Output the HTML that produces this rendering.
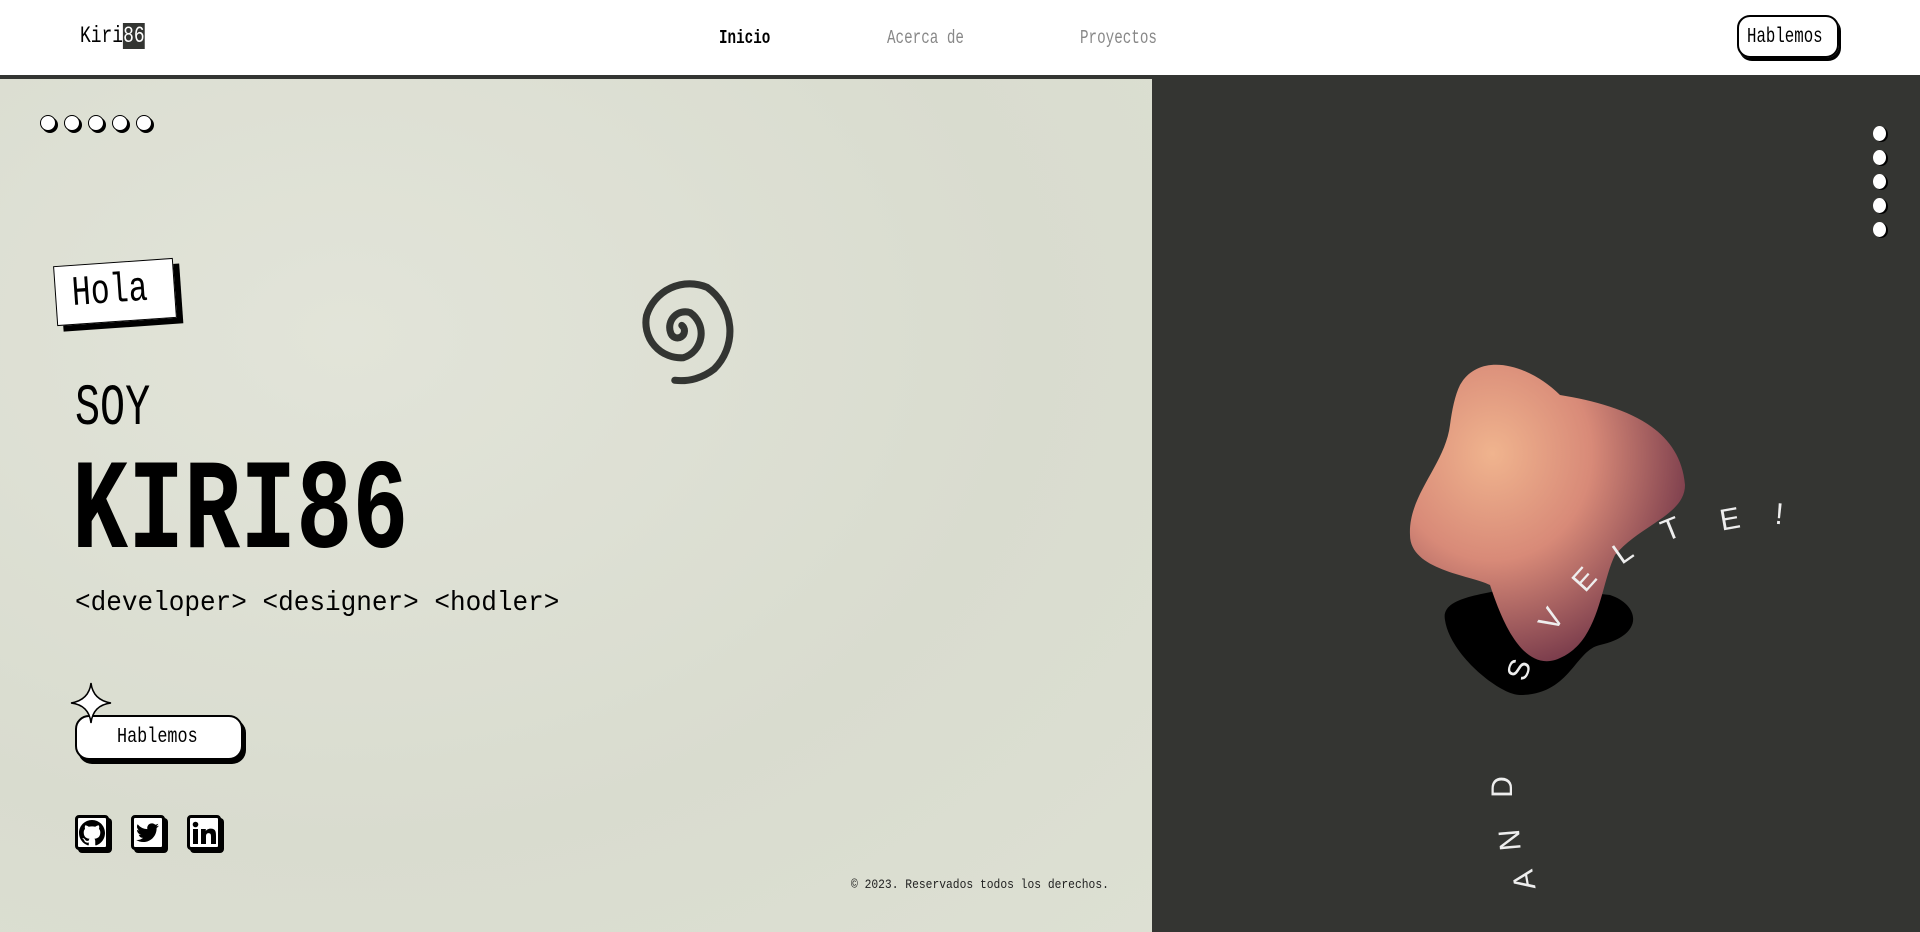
<!DOCTYPE html>
<html><head><meta charset="utf-8"><style>
*{margin:0;padding:0;box-sizing:border-box}
body{width:1920px;height:932px;overflow:hidden;font-family:"Liberation Mono",monospace;background:#fff;position:relative}
.c{display:inline-block;transform:scaleX(.75);transform-origin:left center;white-space:nowrap}
nav{position:absolute;left:0;top:0;width:1920px;height:79px;background:#fff;border-bottom:4px solid #333532;z-index:2}
.abs{position:absolute}
.left{position:absolute;left:0;top:79px;width:1152px;height:853px;background:radial-gradient(ellipse at 30% 30%,#e2e4d9,#d9dccf 60%,#dde0d3)}
.right{position:absolute;left:1152px;top:79px;width:768px;height:853px;background:#343532}
.dot{position:absolute;width:16px;height:16px;border-radius:50%;background:#fff;border:1.5px solid #000;box-shadow:2px 2px 0 #000}
.rdot{position:absolute;width:13px;height:15px;border-radius:50%;background:#fff;box-shadow:2px 1px 0 #000}
.soc{position:absolute;top:815px;width:34px;height:35px;border:3px solid #000;border-radius:4px;background:#fff;box-shadow:3px 3px 0 #000;display:flex;align-items:center;justify-content:center}
.lt{position:absolute;color:#eee;font-family:"Liberation Sans",sans-serif;font-size:30px;line-height:1}
</style></head><body>
<nav>
 <div class="abs" style="left:80px;top:23px;font-size:23px"><span class="c" style="transform:scaleX(.78)">Kiri<span style="background:#333532;color:#fff">86</span></span></div>
 <div class="abs" style="left:719px;top:27px;font-size:19px;font-weight:bold"><span class="c">Inicio</span></div>
 <div class="abs" style="left:887px;top:27px;font-size:19px;color:#888"><span class="c">Acerca de</span></div>
 <div class="abs" style="left:1080px;top:27px;font-size:19px;color:#888"><span class="c">Proyectos</span></div>
 <div class="abs" style="left:1737px;top:15px;width:102px;height:43px;border:2px solid #000;border-radius:13px;box-shadow:2px 3px 0 #000;font-size:21px;padding:9px 0 0 8px"><span class="c">Hablemos</span></div>
</nav>
<div class="left"></div>
<div class="right"></div>
<div class="dot" style="left:40px;top:115px"></div>
<div class="dot" style="left:64px;top:115px"></div>
<div class="dot" style="left:88px;top:115px"></div>
<div class="dot" style="left:112px;top:115px"></div>
<div class="dot" style="left:136px;top:115px"></div>
<div class="rdot" style="left:1873px;top:126px"></div>
<div class="rdot" style="left:1873px;top:150px"></div>
<div class="rdot" style="left:1873px;top:174px"></div>
<div class="rdot" style="left:1873px;top:198px"></div>
<div class="rdot" style="left:1873px;top:222px"></div>

<div class="abs" style="left:55px;top:262px;width:120px;height:60px;background:#fff;border:1.5px solid #000;box-shadow:6px 6px 0 #000;transform:rotate(-4deg);font-size:42px;padding:4px 0 0 16px"><span class="c">Hola</span></div>

<svg class="abs" style="left:614px;top:266px" width="130" height="130" viewBox="0 0 120 120">
<path d="M62 56 a5 5 0 1 1 -8 5 a11 11 0 0 1 14 -14 a18 18 0 0 1 -5 32 a25 25 0 0 1 -26 -30 a32 32 0 0 1 43 -20 a38 38 0 0 1 5 58 a38 38 0 0 1 -28 8" fill="none" stroke="#333532" stroke-width="5" stroke-linecap="round" transform="translate(60 60) scale(1.3) translate(-60 -60)"/>
</svg>

<div class="abs" style="left:75px;top:381px;font-size:58px;line-height:1"><span class="c" style="transform:scaleX(.72)">SOY</span></div>
<div class="abs" style="left:72px;top:450px;font-size:128px;font-weight:bold;line-height:1"><span class="c" style="transform:scaleX(.73)">KIRI86</span></div>
<div class="abs" style="left:75px;top:590px;font-size:28px;line-height:1"><span class="c" style="transform:scaleX(.93)">&lt;developer&gt; &lt;designer&gt; &lt;hodler&gt;</span></div>

<div class="abs" style="left:75px;top:715px;width:168px;height:45px;background:#fff;border:2px solid #000;border-radius:14px;box-shadow:3px 4px 0 #000;font-size:21px;padding:9px 0 0 40px"><span class="c" style="transform:scaleX(.8)">Hablemos</span></div>
<svg class="abs" style="left:70px;top:682px" width="42" height="42" viewBox="0 0 42 42"><path d="M21 1 Q23 18 41 21 Q23 23 21 41 Q19 23 1 21 Q19 18 21 1Z" fill="#fff" stroke="#000" stroke-width="1.5"/></svg>

<div class="soc" style="left:75px"><svg width="26" height="26" viewBox="0 0 16 16"><path d="M8 0C3.58 0 0 3.58 0 8c0 3.540 2.290 6.530 5.470 7.590.4.07.55-.17.55-.38v-1.34c-2.230.48-2.7-1.070-2.7-1.070-.36-.93-.89-1.170-.89-1.170-.73-.5.05-.49.05-.49.8.06 1.230.83 1.230.83.72 1.230 1.870.87 2.330.66.07-.52.28-.87.51-1.070-1.780-.2-3.640-.89-3.640-3.950 0-.87.31-1.590.82-2.150-.08-.2-.36-1.020.08-2.120 0 0 .67-.21 2.2.82a7.6 7.6 0 0 1 4 0c1.530-1.040 2.2-.82 2.2-.82.44 1.1.16 1.920.08 2.120.51.56.82 1.270.82 2.150 0 3.070-1.870 3.750-3.650 3.950.29.25.54.73.54 1.480v2.2c0 .21.15.46.55.38A8 8 0 0 0 16 8c0-4.420-3.580-8-8-8z"/></svg></div>
<div class="soc" style="left:131px"><svg width="26" height="24" viewBox="0 0 24 24"><path d="M23 4.6a9.4 9.4 0 0 1-2.7.7 4.7 4.7 0 0 0 2-2.6 9.4 9.4 0 0 1-3 1.1 4.7 4.7 0 0 0-8 4.3A13.3 13.3 0 0 1 1.6 3.2a4.7 4.7 0 0 0 1.5 6.3 4.7 4.7 0 0 1-2.1-.6v.1a4.7 4.7 0 0 0 3.8 4.6 4.7 4.7 0 0 1-2.1.1 4.7 4.7 0 0 0 4.4 3.2A9.4 9.4 0 0 1 0 18.9a13.3 13.3 0 0 0 7.2 2.1c8.6 0 13.4-7.2 13.4-13.4v-.6A9.5 9.5 0 0 0 23 4.6z"/></svg></div>
<div class="soc" style="left:187px"><svg width="24" height="24" viewBox="0 0 24 24"><rect x="1" y="8" width="5" height="15"/><circle cx="3.5" cy="3.5" r="2.8"/><path d="M9 8h4.8v2.1c.7-1.3 2.4-2.5 4.9-2.5 5 0 5.3 3.3 5.3 7.6V23h-5v-7c0-1.7 0-3.9-2.4-3.9S14 14 14 15.9V23H9z"/></svg></div>

<div class="abs" style="left:851px;top:877px;font-size:13px;color:#222"><span class="c" style="transform:scaleX(.87)">© 2023. Reservados todos los derechos.</span></div>

<svg class="abs" style="left:1400px;top:355px" width="320" height="350" viewBox="0 0 320 350">
<defs><radialGradient id="g" cx="0.3" cy="0.3" r="0.8"><stop offset="0" stop-color="#f0b48e"/><stop offset="0.45" stop-color="#d88a78"/><stop offset="1" stop-color="#6a2f44"/></radialGradient></defs>
<path d="M45 265 C40 240 90 240 120 230 L210 240 C240 250 245 280 200 290 C175 295 170 340 120 340 C100 340 50 300 45 265Z" fill="#000"/>
<path d="M60 30 C80 -5 130 10 160 40 C220 50 280 70 285 130 C285 160 240 170 215 200 C200 230 200 290 155 305 C120 315 100 260 90 230 C70 220 10 215 10 180 C8 140 45 110 50 70 C52 55 55 40 60 30Z" fill="url(#g)"/>
</svg>
<div class="lt" style="left:1510px;top:655px;transform:rotate(-70deg)">S</div>
<div class="lt" style="left:1542px;top:605px;transform:rotate(-58deg)">V</div>
<div class="lt" style="left:1575px;top:565px;transform:rotate(-48deg)">E</div>
<div class="lt" style="left:1615px;top:538px;transform:rotate(-35deg)">L</div>
<div class="lt" style="left:1662px;top:515px;transform:rotate(-22deg)">T</div>
<div class="lt" style="left:1720px;top:505px;transform:rotate(-10deg)">E</div>
<div class="lt" style="left:1775px;top:500px;transform:rotate(5deg)">!</div>
<div class="lt" style="left:1515px;top:865px;transform:rotate(-100deg)">A</div>
<div class="lt" style="left:1500px;top:825px;transform:rotate(-95deg)">N</div>
<div class="lt" style="left:1492px;top:772px;transform:rotate(-90deg)">D</div>
</body></html>
